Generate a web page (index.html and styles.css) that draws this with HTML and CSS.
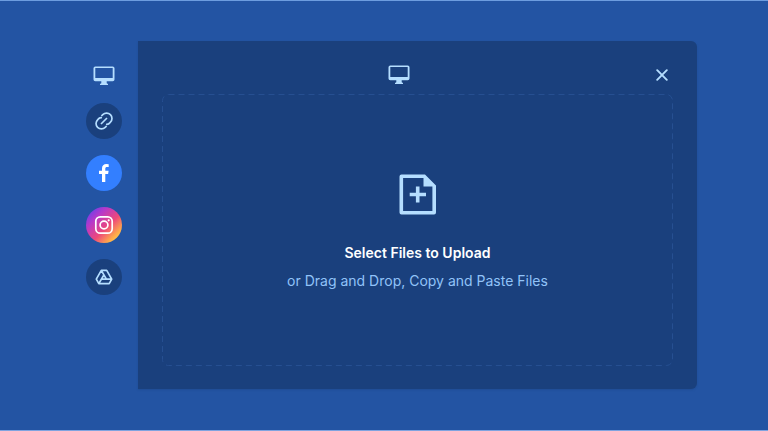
FILE: index.html
```html
<!DOCTYPE html>
<html lang="en">
<head>
<meta charset="utf-8">
<title>Upload files</title>
<link rel="stylesheet" href="styles.css">
</head>
<body>
<main class="uploader">
  <nav class="sources">
    <button class="source source-device" aria-label="My device">
      <svg class="monitor" viewBox="0 0 22 20"><path fill-rule="evenodd" d="M2.3 .5H19.7Q21.5 .5 21.5 2.3V13.4Q21.5 15.2 19.7 15.2H13.7V17.3L15 18V19H7V18L8.3 17.3V15.2H2.3Q.5 15.2 .5 13.4V2.3Q.5 .5 2.3 .5ZM2.3 2V12H19.7V2Z"/></svg>
    </button>
    <button class="source source-link" aria-label="Link">
      <svg width="20" height="20" viewBox="0 0 20 20" fill="none" stroke="currentColor" stroke-width="1.7"><path d="M7 13L13 7M7.4 5L8.8 3.6A5.2 5.2 0 0 1 16.4 11.2L15.1 12.5Q13.8 13.6 12 13.3M12.6 15L11.2 16.4A5.2 5.2 0 0 1 3.6 8.8L4.9 7.5Q6.2 6.4 8 6.7"/></svg>
    </button>
    <button class="source source-facebook" aria-label="Facebook">
      <svg width="12" height="20" viewBox="0 0 12 20" fill="#fff"><path d="M4 19V10.9H1V7.7H4V5.5C4 2.5 5.7 1 8.4 1Q9.7 1 10.7 1.2V4H9.1C7.8 4 7.3 4.7 7.3 5.7V7.7H10.6L10.1 10.9H7.3V19Z"/></svg>
    </button>
    <button class="source source-instagram" aria-label="Instagram">
      <svg width="20" height="20" viewBox="0 0 20 20" fill="none" stroke="#fff" stroke-width="1.7"><rect x="1.8" y="1.8" width="16.4" height="16.4" rx="4.5"/><circle cx="10" cy="10" r="3.9"/><circle cx="14.7" cy="5.3" r="1.1" fill="#fff" stroke="none"/></svg>
    </button>
    <button class="source source-drive" aria-label="Google Drive">
      <svg width="18" height="18" viewBox="0 0 18 18" fill="none" stroke="currentColor" stroke-width="1.7" stroke-linejoin="round"><path d="M6.3 2.3H11.7L16.7 11.2L14.2 15.6H3.8L1.3 11.2ZM6.3 2.3L11.4 11.2H16.7M3.8 15.6L9 6.7M6.3 11.2H11.4"/></svg>
    </button>
  </nav>
  <section class="panel">
    <header class="panel-head">
      <svg class="monitor" viewBox="0 0 22 20"><path fill-rule="evenodd" d="M2.3 .5H19.7Q21.5 .5 21.5 2.3V13.4Q21.5 15.2 19.7 15.2H13.7V17.3L15 18V19H7V18L8.3 17.3V15.2H2.3Q.5 15.2 .5 13.4V2.3Q.5 .5 2.3 .5ZM2.3 2V12H19.7V2Z"/></svg>
      <button class="close" aria-label="Close">
        <svg width="12" height="12" viewBox="0 0 12 12" stroke="currentColor" stroke-width="1.9" stroke-linecap="round"><path d="M1.2 1.2L10.8 10.8M10.8 1.2L1.2 10.8"/></svg>
      </button>
    </header>
    <div class="dropzone">
      <svg class="outline" width="511" height="272"><rect x=".5" y=".5" width="510" height="271" rx="6"/></svg>
      <svg class="file" width="38" height="42" viewBox="0 0 38 42"><path fill-rule="evenodd" d="M2.5 .5H26L37 11.5V38.5Q37 40.5 35 40.5H2.5Q.5 40.5 .5 38.5V2.5Q.5 .5 2.5 .5ZM4.1 4.1V36.9H33.4V12.5H24.5V4.1Z"/><path d="M16.9 12.5H20.5V18.7H27V22.3H20.5V28.5H16.9V22.3H10.7V18.7H16.9Z"/></svg>
      <h1 class="title">Select Files to Upload</h1>
      <p class="hint">or Drag and Drop, Copy and Paste Files</p>
    </div>
  </section>
</main>
</body>
</html>
```
FILE: styles.css
```css
* { box-sizing: border-box; }
body {
  margin: 0;
  height: 431px;
  background: #2354a3;
  border-top: 1px solid #6d9ddf;
  border-bottom: 1px solid #7fa3df;
  color: #b5deff;
  font-family: Inter, sans-serif;
  overflow: hidden;
}
button { border: 0; padding: 0; background: none; color: inherit; }
svg { display: block; flex: none; }
.uploader { display: flex; gap: 16px; padding: 40.4px 0 0 86px; }
.sources { display: flex; flex-direction: column; gap: 16px; padding-top: 23.2px; }
.source {
  display: flex;
  align-items: center;
  justify-content: center;
  width: 36px;
  height: 36px;
  border-radius: 50%;
}
.source-device { height: 22px; }
.monitor { width: 22px; height: 20px; fill: currentColor; }
.source-link, .source-drive { background: #1a407d; }
.source-facebook { background: #337fff; }
.source-instagram {
  background: linear-gradient(135deg, #6840ed 8%, #b839c8 30%, #ed487b 57%, #ffad49 80%, #ffdc58 96%);
}
.panel {
  width: 559px;
  height: 348px;
  padding: 24px;
  border-radius: 0 6px 6px 0;
  background: #1a407d;
  box-shadow: 0 1px 2px #1a407d60;
}
.panel-head {
  display: grid;
  grid-template-columns: 1fr 22px 1fr;
  align-items: center;
  height: 20px;
  margin: 0 5px 9px 0;
}
.panel-head .monitor { grid-column: 2; margin-left: -16.5px; }
.panel-head .close { grid-column: 3; }
.close { justify-self: end; }
.dropzone {
  display: flex;
  flex-direction: column;
  align-items: center;
  width: 511px;
  height: 272px;
  padding-top: 79.6px;
  position: relative;
}
.outline { position: absolute; inset: 0; fill: none; stroke: #264f91; stroke-dasharray: 6 4; }
.file { fill: currentColor; }
.title { margin: 27px 0 0; font-size: 14px; line-height: 20px; font-weight: 600; color: #fff; white-space: nowrap; }
.hint { margin: 8px 0 0; font-size: 14px; line-height: 20px; color: #91c3f8; white-space: nowrap; }
```
